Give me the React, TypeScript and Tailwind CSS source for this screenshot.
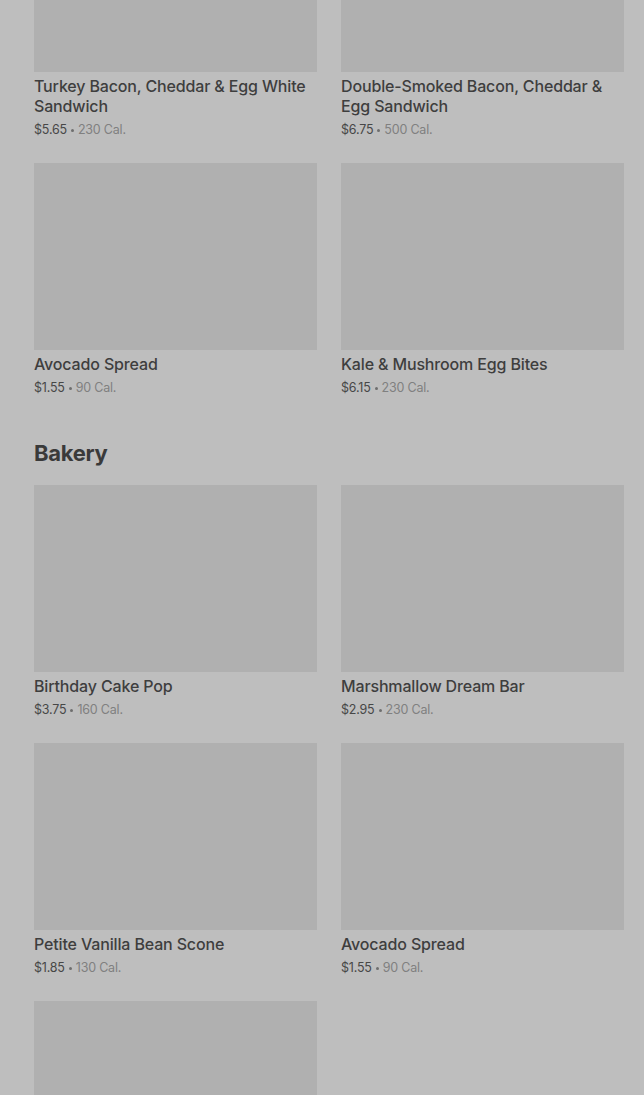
import React from "react";

type Item = { name: string; price: string; cal: string };

const rowsTop: Item[] = [
  { name: "Turkey Bacon, Cheddar & Egg White Sandwich", price: "$5.65", cal: "230 Cal." },
  { name: "Double-Smoked Bacon, Cheddar & Egg Sandwich", price: "$6.75", cal: "500 Cal." },
  { name: "Avocado Spread", price: "$1.55", cal: "90 Cal." },
  { name: "Kale & Mushroom Egg Bites", price: "$6.15", cal: "230 Cal." },
];

const bakery: Item[] = [
  { name: "Birthday Cake Pop", price: "$3.75", cal: "160 Cal." },
  { name: "Marshmallow Dream Bar", price: "$2.95", cal: "230 Cal." },
  { name: "Petite Vanilla Bean Scone", price: "$1.85", cal: "130 Cal." },
  { name: "Avocado Spread", price: "$1.55", cal: "90 Cal." },
];

function Card({ item }: { item: Item }) {
  return (
    <div className="flex flex-col">
      <div className="h-[187px] w-full bg-[#b0b0b0]" />
      <div className="mt-1 text-[16px] leading-5 font-medium tracking-[-0.15px] text-[#3e3e3e]">{item.name}</div>
      <div className="mt-[5px] flex items-center gap-[4px] text-[12.5px] leading-[18px] tracking-[-0.2px] text-[#474747]">
        <span>{item.price}</span>
        <span className="h-[3px] w-[3px] rounded-full bg-[#6e6e6e]" />
        <span className="text-[#808080]">{item.cal}</span>
      </div>
    </div>
  );
}

export default function App() {
  return (
    <div
      className="h-[1095px] w-[644px] overflow-hidden bg-[#bebebe] pl-[34px] pr-[20px]"
      style={{ fontFamily: "Inter, 'Noto Sans', Arial, sans-serif" }}
    >
      <div className="-mt-[115px] grid grid-cols-2 gap-x-6 gap-y-[24px]">
        {rowsTop.map((it, i) => (
          <Card key={i} item={it} />
        ))}
      </div>
      <h2 className="mt-[42px] mb-[18px] text-[22px] leading-[28px] font-bold text-[#3a3a3a] tracking-[-0.3px]">
        Bakery
      </h2>
      <div className="grid grid-cols-2 gap-x-6 gap-y-[24px]">
        {bakery.map((it, i) => (
          <Card key={i} item={it} />
        ))}
        <div className="h-[187px] w-full bg-[#b0b0b0]" />
      </div>
    </div>
  );
}
